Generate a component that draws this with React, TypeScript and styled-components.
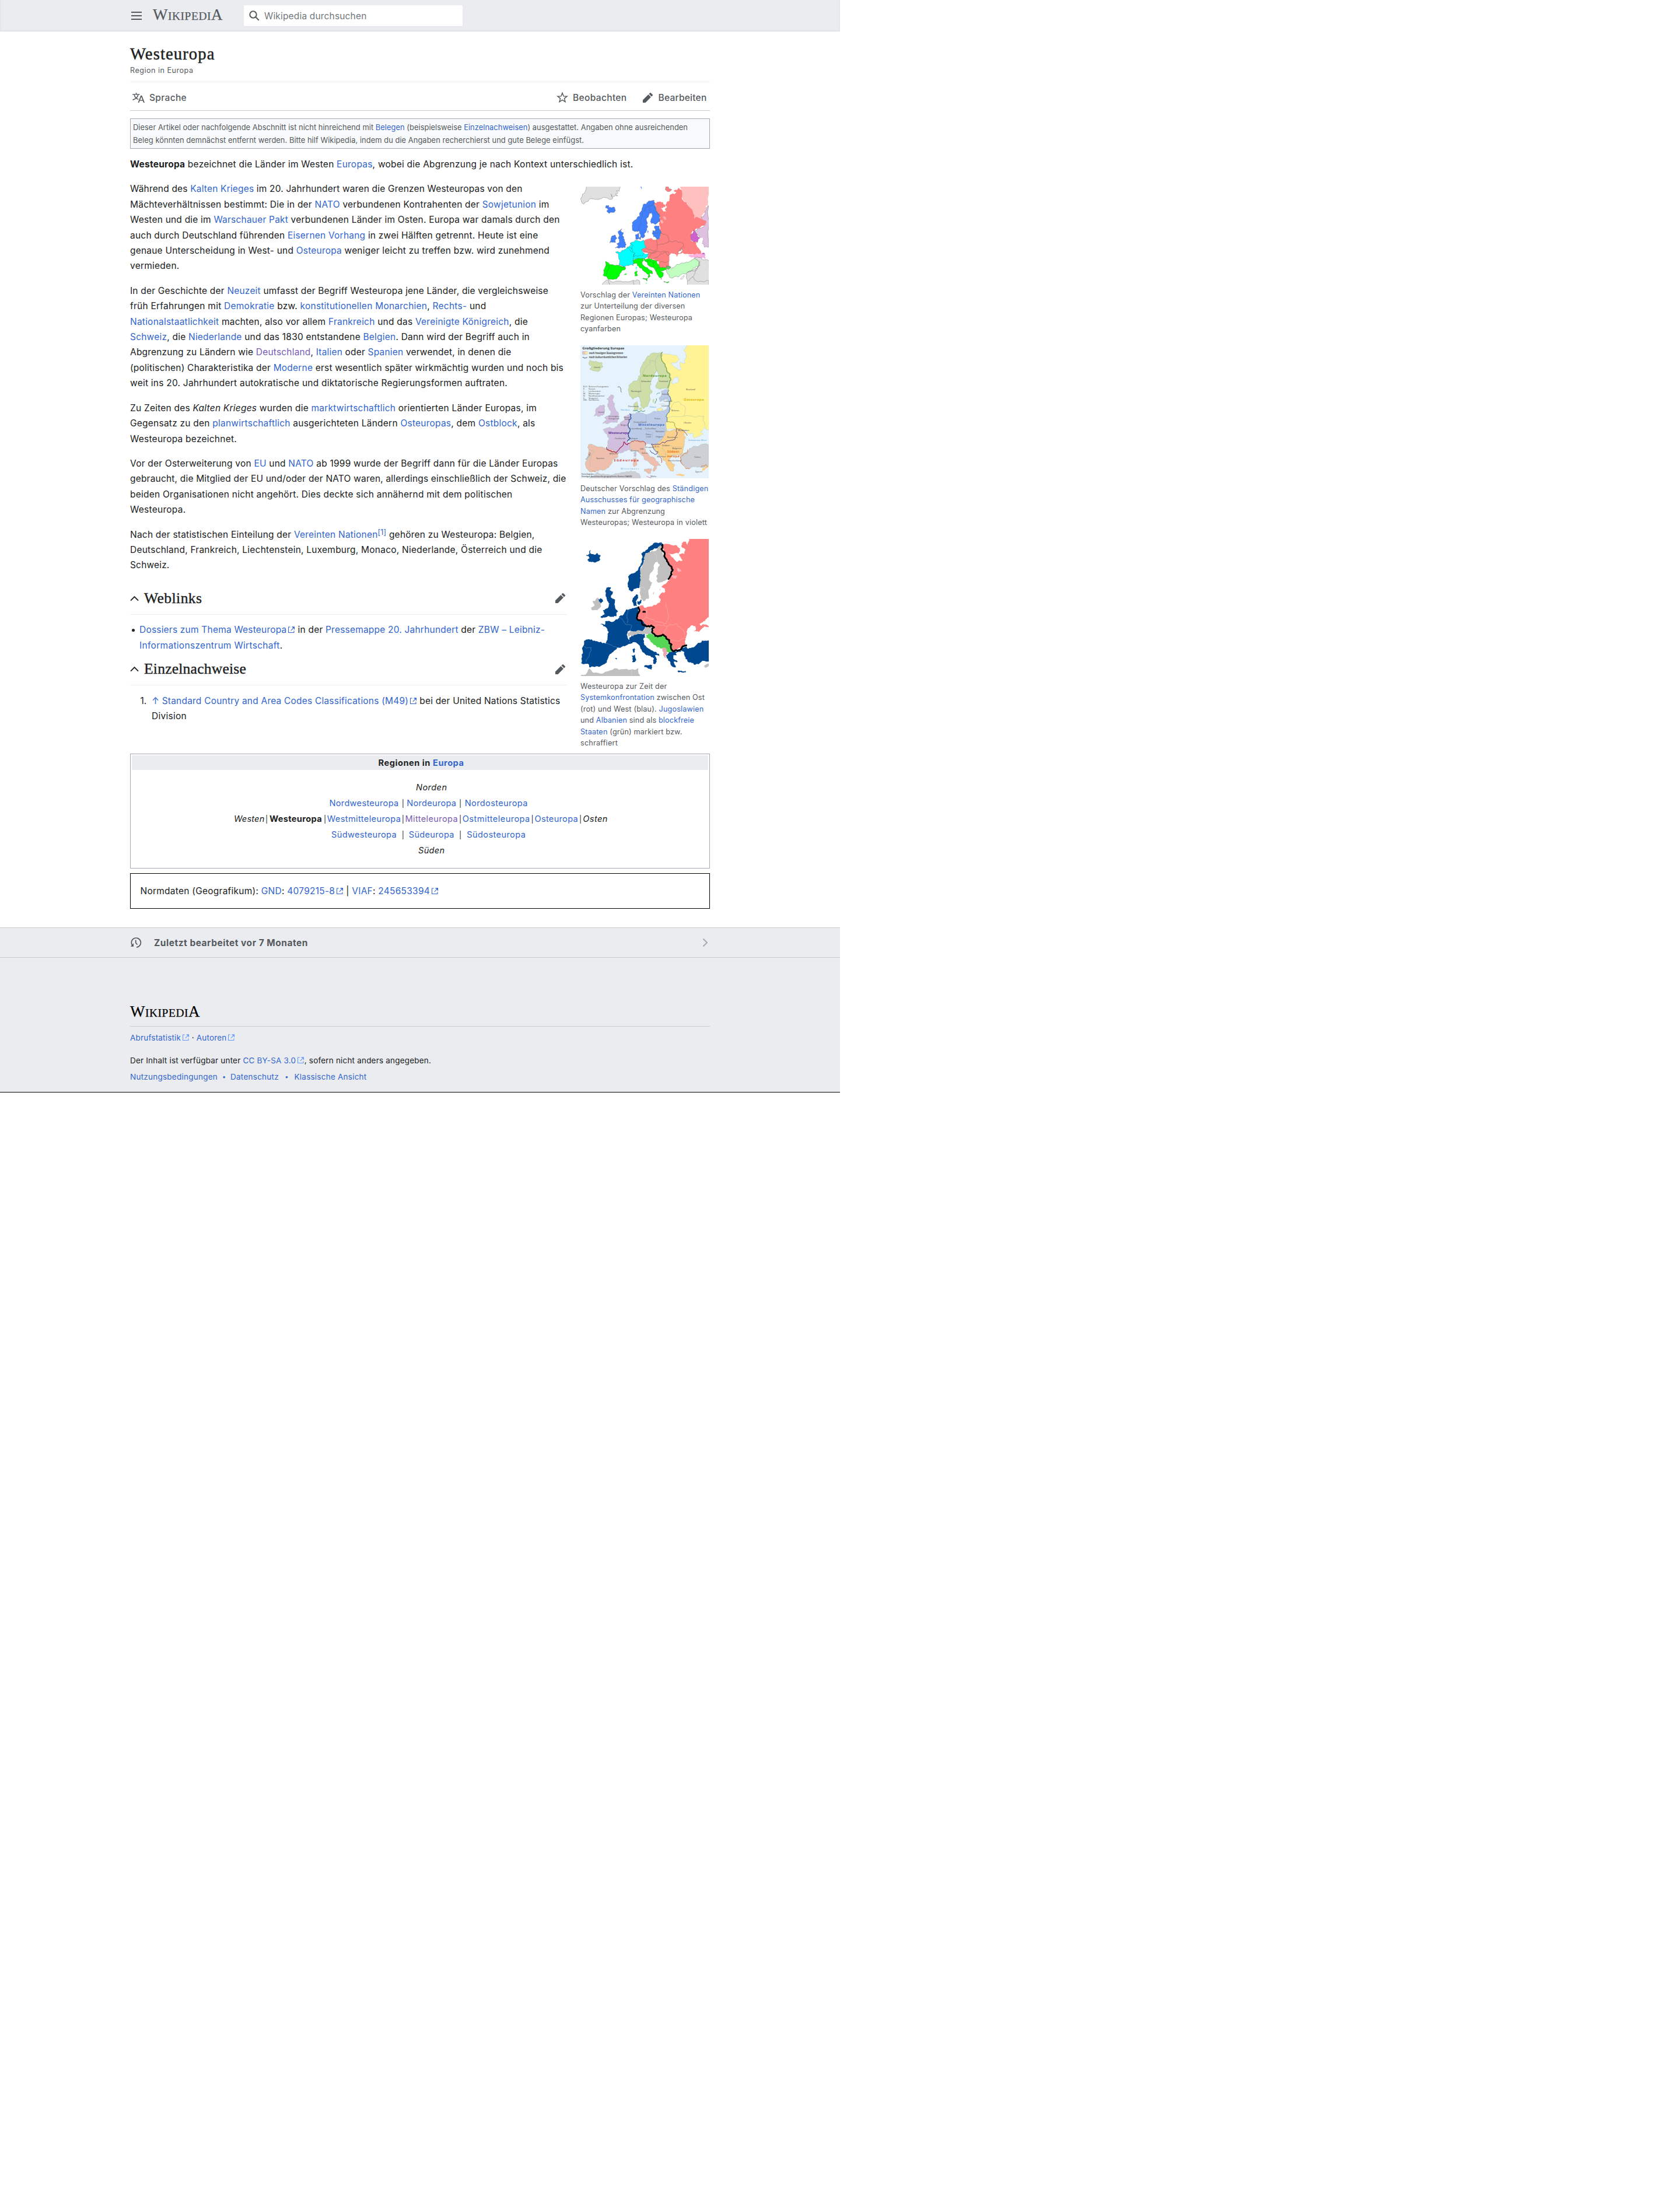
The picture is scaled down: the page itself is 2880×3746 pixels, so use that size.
import React, { useLayoutEffect, useRef, useState } from 'react';
import styled, { createGlobalStyle } from 'styled-components';

const sans = `Inter, "Liberation Sans", sans-serif`;
const serif = `"Liberation Serif", serif`;

const GlobalStyle = createGlobalStyle`
  body { margin: 0; background: #fff; color: #202122; font-family: ${sans}; }
  svg { display: block; flex: none; }
`;

const Page = styled.div`
  width: 1440px;
  font-size: 15.5px;
  font-weight: 430;
`;

/* ---------- text primitives ---------- */

const LineBox = styled.span`
  display: block;
  width: max-content;
  white-space: nowrap;
`;

type FitProps = { w: number; children: React.ReactNode };

/* A line of text whose tracking is adjusted so that it spans w pixels. */
function Fit({ w, children }: FitProps) {
  const ref = useRef<HTMLSpanElement>(null);
  const [tracking, setTracking] = useState(0);
  useLayoutEffect(() => {
    const el = ref.current;
    if (!el) return;
    el.style.letterSpacing = '0px';
    const natural = el.getBoundingClientRect().width;
    const count = (el.textContent || '').length || 1;
    const next = (w - natural) / count;
    el.style.letterSpacing = `${next}px`;
    setTracking(next);
  }, [w]);
  return (
    <LineBox ref={ref} style={{ letterSpacing: `${tracking}px` }}>
      {children}
    </LineBox>
  );
}

const A = styled.a<{ $visited?: boolean }>`
  color: ${(p) => (p.$visited ? '#795cb2' : '#3366cc')};
  text-decoration: none;
`;

const Ref = styled.sup`
  font-size: 12.4px;
  line-height: 1;
  vertical-align: 5px;
`;

const Ext = styled.svg.attrs({ viewBox: '1 0.5 10.5 10.5', width: 11, height: 11 })<{ $light?: boolean }>`
  display: inline-block;
  margin: 0 1px 0 2.5px;
  vertical-align: 0;
  fill: none;
  stroke: ${(p) => (p.$light ? '#6699ff' : '#3366cc')};
  stroke-width: 1;
`;

function ExternalIcon({ light }: { light?: boolean }) {
  return (
    <Ext $light={light}>
      <path d="M4.5 1.5h-3v9h9v-3M7 1.5h4v4M10.8 1.7 5.5 7" />
      <path d="M7.5 1h4v4z" fill={light ? '#6699ff' : '#3366cc'} stroke="none" />
    </Ext>
  );
}

/* ---------- header ---------- */

const TopBar = styled.header`
  box-sizing: border-box;
  height: 54px;
  padding-left: 225px;
  display: flex;
  align-items: center;
  background: #eaecf0;
  box-shadow: inset 0 -1px 3px rgba(0, 0, 0, 0.08);
`;

const Burger = styled.div`
  width: 18px;
  height: 14px;
  display: flex;
  flex-direction: column;
  justify-content: space-between;
  & > i { height: 2px; background: #54595d; }
`;

const Logo = styled.div<{ $dark?: boolean }>`
  display: flex;
  align-items: baseline;
  font-family: ${serif};
  font-size: 19.5px;
  line-height: 30px;
  color: ${(p) => (p.$dark ? '#000' : '#54595d')};
  -webkit-text-stroke: 0.25px;
  & b { font-weight: 400; font-size: 27px; }
`;

const LogoSlot = styled.div`
  width: 156px;
  padding: 0 0 2px 19px;
  box-sizing: border-box;
  margin-right: 19px;
`;

function Wordmark({ dark }: { dark?: boolean }) {
  return (
    <Logo $dark={dark}>
      <Fit w={120}><b>W</b>IKIPEDI<b>A</b></Fit>
    </Logo>
  );
}

const Search = styled.div`
  box-sizing: border-box;
  width: 375px;
  height: 36px;
  padding-left: 9px;
  display: flex;
  align-items: center;
  gap: 8px;
  background: #fff;
  border-radius: 2px;
  box-shadow: 0 1px 1px rgba(0, 0, 0, 0.05);
  color: #72777d;
`;

/* ---------- title and toolbar ---------- */

const Content = styled.main`
  width: 994px;
  margin-left: 223px;
`;

const TitleBlock = styled.div`
  padding: 20px 0 9px;
  border-bottom: 1px solid #eaecf0;
`;

const Title = styled.h1`
  margin: 0;
  font: 400 28.7px/36px ${serif};
  -webkit-text-stroke: 0.45px;
`;

const Subtitle = styled.div`
  padding-top: 1px;
  font-size: 12.6px;
  line-height: 20px;
  color: #54595d;
`;

const Toolbar = styled.div`
  box-sizing: border-box;
  height: 49px;
  padding: 4px 5.5px 0 4px;
  display: flex;
  align-items: center;
  justify-content: space-between;
  border-bottom: 1px solid #c8ccd1;
  color: #54595d;
  font-weight: 500;
`;

const Actions = styled.div`
  display: flex;
  gap: 26px;
`;

const Tool = styled.div<{ $gap?: number }>`
  display: flex;
  align-items: center;
  gap: ${(p) => p.$gap ?? 8}px;
`;

const Notice = styled.div`
  box-sizing: border-box;
  height: 52px;
  margin: 13px 0 14px;
  padding: 4px 4px 2px;
  border: 1px solid #a2a9b1;
  background: #f8f9fa;
  color: #54595d;
  font-size: 12.9px;
  line-height: 21.9px;
`;

/* ---------- article ---------- */

const P = styled.p`
  margin: 0 0 16px;
  line-height: 26.4px;
`;

const Columns = styled.div`
  display: grid;
  grid-template-columns: 749px 222px;
  column-gap: 23px;
  height: 980.4px;
`;

const Section = styled.h2`
  margin: 0;
  height: 54px;
  padding-right: 2px;
  display: flex;
  align-items: center;
  border-bottom: 1px solid #eaecf0;
  font: 400 25.6px/30px ${serif};
  -webkit-text-stroke: 0.4px;
  & > :first-child { margin-right: 9px; }
  & > :last-child { margin-left: auto; }
`;

const List = styled.div`
  display: flex;
  margin-top: 13.5px;
  line-height: 26.4px;
`;

const Bullet = styled.i`
  width: 5px;
  height: 5px;
  margin: 11px 8.5px 0 2.5px;
  border-radius: 50%;
  background: #202122;
`;

const Num = styled.span`
  width: 19.5px;
  padding-left: 17.5px;
`;

const Figures = styled.aside`
  display: flex;
  flex-direction: column;
  gap: 18.5px;
  padding-top: 8.6px;
`;

const Figure = styled.figure`
  margin: 0;
  display: flex;
  flex-direction: column;
  gap: 7.5px;
`;

const Caption = styled.figcaption`
  color: #54595d;
  font-size: 12.6px;
  line-height: 19.5px;
`;

/* ---------- navigation box ---------- */

const NavBox = styled.nav`
  box-sizing: border-box;
  height: 197px;
  padding: 2px;
  border: 1px solid #a2a9b1;
  font-size: 14.6px;
`;

const NavHead = styled.div`
  height: 25px;
  padding: 1px 0 0 4px;
  box-sizing: border-box;
  display: flex;
  align-items: center;
  justify-content: center;
  background: #eaecf0;
  font-weight: 650;
`;

const NavGrid = styled.div`
  display: grid;
  grid-template-columns: 52.5px 7px 93px 7px 127px 6.5px 91.5px 7px 116.5px 7px 75.5px 7px 44px;
  grid-auto-rows: 27px;
  align-items: center;
  justify-items: center;
  justify-content: start;
  padding: 17px 0 0 175px;
`;

const Cell = styled.div<{ $col?: number; $kind?: 'i' | 'b' | 'sep' }>`
  grid-column: ${(p) => p.$col ?? 'auto'};
  font-size: ${(p) => (p.$kind === 'sep' ? '12.5px' : 'inherit')};
  font-style: ${(p) => (p.$kind === 'i' ? 'italic' : 'normal')};
  font-weight: ${(p) => (p.$kind === 'b' ? 700 : 'inherit')};
`;

const Norm = styled.div`
  box-sizing: border-box;
  height: 61px;
  margin-top: 8px;
  padding-left: 16.5px;
  display: flex;
  align-items: center;
  border: 1px solid #000;
`;

/* ---------- footer ---------- */

const Footer = styled.footer`
  box-sizing: border-box;
  height: 283px;
  margin-top: 32px;
  background: #eaecf0;
  border-bottom: 1px solid #000;
`;

const LastEdit = styled.div`
  box-sizing: border-box;
  height: 52px;
  padding: 1px 226px 0 223px;
  display: flex;
  align-items: center;
  border: solid #c8ccd1;
  border-width: 1px 0;
  color: #54595d;
  font-weight: 650;
  & > :first-child { margin-right: 21px; }
  & > :last-child { margin-left: auto; }
`;

const FooterBody = styled.div`
  width: 994px;
  margin-left: 223px;
  padding-top: 77px;
  font-size: 13.5px;
  line-height: 22px;
`;

const FooterLogo = styled.div`
  padding-bottom: 10px;
  margin-bottom: 8px;
  height: 30px;
  border-bottom: 1px solid #c8ccd1;
`;

const FooterRow = styled.div<{ $after?: number }>`
  display: flex;
  height: 22px;
  margin-bottom: ${(p) => p.$after ?? 0}px;
`;

const Dot = styled.span<{ $w: number }>`
  width: ${(p) => p.$w}px;
  text-align: center;
  color: #3366cc;
  font-size: 11px;
`;

/* ---------- icons ---------- */

function Pencil() {
  return (
    <svg width="19" height="19" viewBox="0 0 20 20" fill="#54595d">
      <path d="M16.77 8l1.94-2a1 1 0 0 0 0-1.41l-3.34-3.3a1 1 0 0 0-1.41 0L12 3.23zM1 14.25V19h4.75l9.96-9.96-4.75-4.75z" />
    </svg>
  );
}

function Chevron() {
  return (
    <svg width="15" height="10" viewBox="0 0 15 10" fill="none" stroke="#202122" strokeWidth="1.9">
      <path d="M1 8.7 7.5 2.2 14 8.7" />
    </svg>
  );
}

function Language() {
  return (
    <svg width="21" height="21" viewBox="0 0 20 20" fill="#54595d">
      <path d="M20 18h-1.44a.61.61 0 0 1-.4-.12.81.81 0 0 1-.23-.31L17 15h-5l-1 2.54a.77.77 0 0 1-.22.3.59.59 0 0 1-.4.14H9l4.55-11.47h1.89zm-3.53-4.31L14.89 9.500a11.62 11.62 0 0 1-.39-1.24q-.09.37-.19.69l-.19.56-1.58 4.19zm-6.3-1.58a13.43 13.43 0 0 1-2.91-1.41 11.46 11.46 0 0 0 2.81-5.37H12V4H7.310a4 4 0 0 0-.2-.56C6.870 2.790 6.600 2 6.600 2l-1.470.5s.4.890.6 1.500H0v1.330h2.150A11.230 11.230 0 0 0 5 10.700a17.190 17.190 0 0 1-5 2.100q.56.820.870 1.380a23.280 23.280 0 0 0 5.220-2.510 15.640 15.640 0 0 0 3.560 1.770zM3.630 5.330h4.910a8.110 8.110 0 0 1-2.450 4.450 9.110 9.110 0 0 1-2.460-4.450z" />
    </svg>
  );
}

function Star() {
  return (
    <svg width="20" height="20" viewBox="0 0 20 20" fill="none" stroke="#54595d" strokeWidth="1.5">
      <path d="m10 2.400 2.150 5.500 5.900.3-4.600 3.700 1.550 5.700-5-3.250-5 3.250 1.550-5.700-4.600-3.700 5.900-.3z" />
    </svg>
  );
}

function Magnifier() {
  return (
    <svg width="18" height="18" viewBox="0 0 18 18" fill="none" stroke="#54595d" strokeWidth="2">
      <circle cx="7" cy="7" r="5.700" />
      <path d="m11 11 5.800 5.800" />
    </svg>
  );
}

function History() {
  return (
    <svg width="20" height="20" viewBox="0 0 20 20" fill="none" stroke="#54595d" strokeWidth="1.700">
      <path d="M4.300 15.300A8 8 0 1 1 11 18" />
      <path d="M9.700 5.500v5l2.800 3" />
      <path d="M.8 16.800h5.200V11z" fill="#54595d" stroke="none" />
    </svg>
  );
}

function Next() {
  return (
    <svg width="10" height="16" viewBox="0 0 10 16" fill="none" stroke="#a2a9b1" strokeWidth="2">
      <path d="m1.500 1.500 6.500 6.500-6.500 6.500" />
    </svg>
  );
}

/* ---------- maps ---------- */

type Pt = [number, number];

/* Splits an edge at a displaced midpoint; the offset depends only on the
   midpoint, so neighbouring shapes that share an edge stay joined. */
function split(a: Pt, b: Pt, depth: number): Pt[] {
  const len = Math.hypot(b[0] - a[0], b[1] - a[1]);
  if (depth === 0 || len < 7) return [b];
  const mx = (a[0] + b[0]) / 2;
  const my = (a[1] + b[1]) / 2;
  const s = Math.sin(mx * 12.9898 + my * 78.233) * 43758.5453;
  const t = Math.sin(mx * 39.346 + my * 11.135) * 24634.6345;
  const k = Math.min(len * 0.22, 5);
  const m: Pt = [mx + (s - Math.floor(s) - 0.5) * 2 * k, my + (t - Math.floor(t) - 0.5) * 2 * k];
  return [...split(a, m, depth - 1), ...split(m, b, depth - 1)];
}

function trace(points: string, close: boolean): string {
  const n = points.trim().split(/[\s,]+/).map(Number);
  const pts: Pt[] = [];
  for (let i = 0; i < n.length; i += 2) pts.push([n[i], n[i + 1]]);
  const out: Pt[] = [pts[0]];
  for (let i = 1; i < pts.length; i++) out.push(...split(pts[i - 1], pts[i], 3));
  if (close) out.push(...split(pts[pts.length - 1], pts[0], 3));
  return 'M' + out.map((p) => `${p[0].toFixed(1)} ${p[1].toFixed(1)}`).join('L') + (close ? 'Z' : '');
}

const Land = ({ c, p, s }: { c: string; p: string; s?: string }) => (
  <path d={trace(p, true)} fill={c} stroke={s} />
);
const Edge = ({ p, c, w }: { p: string; c?: string; w?: number }) => (
  <path d={trace(p, false)} fill="none" stroke={c} strokeWidth={w} />
);

function MapRegions() {
  const blue = '#4080ff';
  const red = '#ff8080';
  const cyan = '#00ffff';
  const green = '#00ff00';
  const grey = '#e0e0e0';
  return (
    <svg width="220" height="168" viewBox="105 60 660 504" stroke="#5c5c5c" strokeWidth="1.200" strokeLinejoin="round">
      <Land c={grey} p="142 55 315 55 308 70 304 85 290 80 298 92 285 98 296 108 268 112 262 98 272 118 250 123 220 116 190 124 160 122 145 135 122 150 112 140 108 120 115 100 128 88 135 72" />
      <Land c="#ffc0c0" s="none" p="612 55 765 55 765 165 755 155 748 185 730 215 735 235 752 240 720 272 705 275 680 240 660 160 628 120" />
      <Land c="#e0c0e0" p="765 158 752 170 745 200 725 218 735 235 752 240 745 260 705 280 688 290 718 320 735 330 728 350 740 370 765 370" />
      <Land c={red} s="none" p="484 145 500 138 530 142 543 155 540 165 518 170 527 180 545 190 540 178 550 166 542 152 560 135 568 100 590 98 598 88 585 82 610 66 625 78 628 125 660 160 685 195 690 225 705 215 735 232 752 240 745 258 705 275 690 285 675 300 672 335 700 345 705 370 722 385 735 405 690 410 660 408 630 400 612 405 600 420 590 405 565 408 562 430 560 450 558 475 545 480 520 478 508 445 480 432 455 430 455 402 435 400 420 385 440 375 432 340 470 325 500 332 515 322 519 300 512 262 510 240 515 215 500 190 492 165" />
      <Land c={red} p="540 58 556 60 558 72 575 75 555 86 542 76" />
      <Land c="#fff" s="none" p="552 100 560 120 556 112 550 108" />
      <Land c="#ffb0b0" s="none" p="514 236 524 232 532 242 522 250" />
      <Land c="#ffb0b0" s="none" p="530 212 545 222 546 229 534 224" />
      <Land c="#fff" p="606 400 612 390 628 380 630 392 618 404" />
      <Land c="#d060d0" p="688 282 700 300 720 325 705 348 675 335 672 310 684 300" />
      <Land c="#fff" s="none" p="706 350 720 325 735 322 733 340 728 358 745 375 765 380 765 430 752 425 745 405 725 400 712 375" />
      <Land c="#ffb0e0" s="none" p="655 410 700 405 728 402 728 420 720 430 700 425 685 422" />
      <Land c="#f0b0e0" s="none" p="725 403 745 405 750 430 735 424 728 432 718 425" />
      <Land c="#c050c0" s="none" p="728 398 742 400 745 407 732 406" />
      <Land c={grey} p="690 428 712 425 765 440 765 570 655 570 650 505 690 485 718 465 712 445" />
      <Land c="#c0ffc0" p="548 470 575 482 600 460 650 448 690 428 715 445 720 465 690 478 655 500 630 508 600 522 565 528 552 505" />
      <Land c="#fff" p="620 535 637 516 640 520 630 534" />
      <Edge p="655 500 685 495 712 470" />
      <Edge p="658 545 680 525 712 470 718 440" />
      <Edge p="680 525 700 545 765 545" />
      <Land c={blue} p="236 170 238 156 252 158 250 165 262 168 280 166 286 182 275 193 255 197 240 186 248 178" />
      <Land c={blue} s="none" p="410 55 424 55 418 74" />
      <Land c={blue} p="425 165 430 150 445 150 458 132 484 130 483 150 492 165 500 190 515 212 510 240 485 252 470 250 465 238 470 225 476 208 472 193 460 197 455 215 445 235 445 255 450 270 443 290 436 310 425 325 415 318 407 288 385 292 372 280 371 245 390 230 410 210 418 185" />
      <Edge p="407 288 412 262 412 230 425 190 440 168 450 162" />
      <Edge p="450 162 462 172 468 195" />
      <Edge p="450 162 470 158 484 142" />
      <Land c={blue} p="485 266 510 262 513 280 519 300 512 325 498 332 480 318 474 300 478 285 490 290" />
      <Edge p="478 288 514 282" />
      <Edge p="474 304 519 302" />
      <Land c={blue} p="387 308 404 297 405 312 402 330 392 332" />
      <Land c={blue} p="408 322 416 320 414 332 407 330" />
      <Land c={blue} s="none" p="449 286 456 288 455 300 450 296" />
      <Land c={blue} p="298 292 318 276 314 290 326 296 320 312 332 340 341 358 335 374 300 376 283 375 300 365 292 352 306 345 300 325 303 305" />
      <Land c={blue} p="265 318 285 310 293 325 287 345 256 350 262 335" />
      <Land c={cyan} p="362 350 382 345 388 335 400 338 412 342 430 335 436 360 440 375 420 385 430 402 455 405 452 422 430 428 380 432 375 460 378 466 345 465 330 474 302 465 306 435 300 415 285 396 310 398 318 388 342 378 355 368" />
      <Edge p="342 378 362 390 385 402 378 425 372 440" />
      <Edge p="362 350 376 362 368 380 372 395" />
      <Edge p="352 372 372 378" />
      <Edge p="385 402 378 420 400 418 425 415 430 402" />
      <Land c={cyan} s="none" p="388 477 396 472 396 490 390 492" />
      <Land c={green} p="235 444 250 452 300 465 338 478 315 498 305 520 290 535 248 538 240 522 220 515 225 488 238 465" />
      <Edge p="234 462 254 466 244 490 240 520" />
      <Edge p="302 465 340 478" />
      <Land c={green} s="none" p="330 510 342 506 340 514 332 514" />
      <Land c={green} p="376 440 400 430 428 430 430 440 422 452 440 475 475 500 477 506 462 505 464 522 454 530 456 512 440 500 410 478 395 455 378 458" />
      <Land c={green} p="425 532 452 530 448 545" />
      <Land c={green} p="385 500 398 495 398 518 386 520" />
      <Land c={green} p="430 430 470 432 500 440 510 465 518 478 548 480 545 488 518 492 530 520 520 538 508 522 496 500 485 480 450 460 438 445" />
      <Edge p="440 442 470 445 482 455 482 472" />
      <Edge p="480 432 482 455" />
      <Edge p="490 490 500 478 518 478" />
      <Land c={green} p="535 547 560 548 558 553 536 552" />
      <Land c={green} s="none" p="440 555 448 556 444 560" />
      <Land c="#60c060" p="548 466 565 468 572 474 556 486" />
      <Edge p="495 332 500 358 540 350 555 345" />
      <Edge p="500 358 495 385 480 392 440 378" />
      <Edge p="420 385 455 402 495 393 540 395 562 405" />
      <Edge p="455 430 475 400 495 393" />
      <Edge p="480 432 500 425 515 405 540 395" />
      <Edge p="510 448 545 450 560 445" />
      <Edge p="519 300 540 305 558 325 555 345 590 338 630 350 632 370 610 390" />
      <Edge p="540 395 555 415 565 408" />
      <Edge p="484 145 500 190 515 215 510 240" />
      <Land c={grey} p="215 570 240 540 260 546 300 545 370 544 405 540 412 570" />
      <Edge p="250 545 255 570" />
      <Edge p="378 544 382 570" />
    </svg>
  );
}

const MapText = styled.text<{ $size?: number; $fill?: string; $bold?: boolean; $italic?: boolean; $track?: number }>`
  font-family: "Open Sans", sans-serif;
  font-size: ${(p) => p.$size ?? 12}px;
  font-weight: ${(p) => (p.$bold ? 700 : 400)};
  font-style: ${(p) => (p.$italic ? 'italic' : 'normal')};
  letter-spacing: ${(p) => p.$track ?? -0.5}px;
  fill: ${(p) => p.$fill ?? '#555'};
  stroke: none;
`;

const countries: [number, number, string][] = [
  [174, 153, 'Island'], [416, 224, 'Schweden'], [510, 224, 'Finnland'], [365, 276, 'Norwegen'],
  [648, 268, 'Russland'], [523, 291, 'Estland'], [534, 328, 'Lettland'], [521, 352, 'Litauen'],
  [350, 354, 'Dänemark'], [573, 375, 'Belarus'], [196, 385, 'Irland'], [248, 405, 'Vereinigtes'],
  [250, 416, 'Königreich'], [328, 410, 'Nieder-'], [332, 421, 'lande'], [312, 449, 'Belgien'],
  [378, 434, 'Deutschland'], [486, 417, 'Polen'], [636, 439, 'Ukraine'], [360, 469, 'Luxemburg'],
  [436, 467, 'Tschechien'], [492, 484, 'Slowakei'], [440, 499, 'Öster-'], [442, 510, 'reich'],
  [492, 509, 'Ungarn'], [358, 520, 'Schweiz'], [282, 519, 'Frankreich'], [607, 476, 'Moldawien'],
  [551, 514, 'Rumänien'], [524, 556, 'Serbien'], [486, 560, 'B.-H.'], [438, 563, 'Kroatien'],
  [577, 571, 'Bulgarien'], [254, 597, 'Andorra'], [362, 583, 'Monaco'], [410, 573, 'S.M.'],
  [420, 595, 'Italien'], [186, 622, 'Spanien'], [499, 611, 'Albanien'], [554, 634, 'Griechenland'],
  [690, 614, 'Türkei'], [695, 691, 'Zypern'], [466, 714, 'Malta'],
];

function MapDivision() {
  const green = '#cfdda6';
  const yellow = '#fff396';
  const violet = '#d2bfe0';
  const blue = '#bccbe8';
  const salmon = '#efbfae';
  const orange = '#fbd08c';
  return (
    <svg width="220" height="228" viewBox="105 36 660 684" stroke="#9ab0a8" strokeWidth="1.200" strokeLinejoin="round">
      <rect x="105" y="36" width="660" height="684" fill="#e6f3fc" stroke="none" />
      <Land c={yellow} s="#a9c8d8" p="655 30 770 30 770 480 745 455 735 470 722 482 735 492 715 505 690 515 685 490 655 488 640 470 600 465 545 475 548 430 545 400 562 370 570 320 555 290 553 262 570 225 565 180 540 140 520 100 528 80 560 82 600 88 612 110 600 125 570 128 590 150 615 165 625 155 618 120 640 130 650 90 636 60" />
      <Land c="#e6f3fc" s="#a9c8d8" p="580 215 600 195 610 210 600 230 580 235" />
      <Land c={green} s="#88b0a0" p="355 240 375 225 400 215 415 180 420 145 440 110 460 90 485 75 525 72 520 100 540 140 565 180 570 215 550 258 520 262 495 255 493 240 512 190 500 165 485 180 482 200 465 225 462 255 475 275 460 300 455 340 432 362 415 345 410 305 395 300 375 315 357 295" />
      <Edge p="410 305 414 250 415 200 440 150 465 112 490 120 500 165" />
      <Edge p="490 120 500 90 522 95" />
      <Land c={green} p="148 125 155 112 172 118 190 122 215 125 222 145 205 165 175 168 152 158 165 148" />
      <Land c={green} p="378 345 395 325 400 345 395 372 380 365" />
      <Land c={green} s="none" p="408 358 422 355 420 370 408 370" />
      <Land c={green} s="none" p="476 315 484 312 482 332 476 330" />
      <Land c={violet} p="240 310 262 290 275 295 270 315 282 335 285 365 302 395 296 430 260 432 220 438 242 420 228 408 250 400 262 378 245 352 250 330" />
      <Land c={violet} p="183 365 205 345 232 350 228 390 200 402 175 400 185 385" />
      <Land c={violet} p="335 400 360 390 365 425 350 465 352 500 345 530 358 545 362 575 330 580 292 590 245 570 252 520 235 490 222 470 265 462 285 455 310 435 325 425" />
      <Land c={blue} p="360 392 388 388 400 378 425 385 442 392 480 375 535 372 552 365 560 330 555 315 515 325 510 305 525 290 520 272 555 268 558 295 570 320 562 370 545 400 548 430 545 475 540 495 520 525 500 542 470 545 440 540 405 525 358 530 350 500 350 465 362 425" />
      <Land c="#fff3a0" p="500 365 520 357 530 370 502 373" />
      <Edge p="442 392 450 440 490 450 540 470" />
      <Edge p="510 310 560 305" />
      <Edge p="508 338 562 340" />
      <Edge p="415 455 440 475 480 485 475 515" />
      <Edge p="475 460 490 480 545 475" />
      <Edge p="560 375 585 330 610 325 640 350 640 400 740 400 745 450" />
      <Edge p="548 405 640 400" />
      <Land c={salmon} p="142 562 150 545 180 552 245 570 303 590 298 610 270 625 262 650 235 675 180 685 145 680 130 650 145 600" />
      <Edge p="150 570 175 580 160 610 155 660" />
      <Land c={salmon} p="358 548 375 530 405 525 440 540 435 560 440 580 465 610 505 635 518 655 500 655 495 672 480 685 482 655 450 630 420 600 395 575 365 575" />
      <Land c={salmon} p="432 675 470 670 465 695 435 685" />
      <Land c={salmon} p="376 620 392 615 392 655 378 658" />
      <Land c={violet} p="378 590 390 582 390 608 380 606" />
      <Land c={orange} p="470 545 500 542 520 525 548 475 600 465 640 480 645 510 640 545 630 590 615 605 590 600 570 610 560 622 590 650 582 685 565 680 545 645 525 610 490 580" />
      <Edge p="530 545 560 550 635 560" />
      <Edge p="525 560 540 600 580 605" />
      <Land c="#cfd0d6" p="620 595 650 585 680 560 730 545 770 545 770 655 730 665 690 660 650 668 620 640" />
      <Land c="#cfd0d6" p="155 715 190 690 250 700 320 690 385 685 410 700 412 725 150 725" />
      <Land c={orange} s="none" p="728 680 760 655 762 662 740 682" />
      <Land c={orange} s="none" p="595 698 640 700 638 706 600 704" />
      <Edge c="#7da63a" w={3.500} p="528 70 520 100 540 140 565 185 570 215 556 258" />
      <Edge c="#3d6b9a" w={2.800} p="556 262 558 295 570 320 562 370 545 400 550 430" />
      <Edge c="#7d8f3a" w={2.500} p="550 430 585 432 598 465" />
      <Edge c="#1f7a68" w={2.500} p="375 370 405 378 438 372" />
      <Edge c="#333" w={2} p="296 250 312 258 317 278" />
      <Edge c="#1f7a68" w={2.500} p="496 310 494 322 488 335" />
      <Edge c="#1f7a68" w={2} p="496 288 505 282 515 280" />
      <Edge c="#2b3f94" w={3.500} p="358 388 366 410 350 440 358 465 350 490 360 515 346 530" />
      <Edge c="#a02050" w={3.500} p="238 560 255 578 290 588 305 570 330 532 346 548 360 538" />
      <Edge c="#c0392b" w={3} p="360 538 385 525 405 530 436 535 438 552" />
      <Edge c="#5b4690" w={3} p="468 545 500 545 540 538 590 520 604 485 598 465" />
      <Edge c="#3c4f90" w={3} p="472 548 490 578 505 585 490 598 462 575" />
      <Edge c="#d08a20" w={3.500} p="598 465 625 470 655 500" />
      <Edge c="#d0502b" w={3} p="514 612 522 640" />
      <Edge c="#e07a30" w={2.500} p="655 572 652 592 618 610 620 635 645 668 668 668" />
      <Edge c="#d0702b" w={2.500} p="726 662 752 650 758 662" />
      <Edge c="#e07a30" w={2} p="150 684 185 687" />
      <Edge c="#c05090" w={2} p="445 708 470 716" />
      <MapText x="115" y="58" $size={18} $bold $fill="#333" $track={-0.1}>Großgliederung Europas</MapText>
      <rect x="116" y="68" width="24" height="14" fill="#e8c8b8" stroke="#9a8fb0" />
      <rect x="130" y="69" width="10" height="13" fill="#ffe890" stroke="none" />
      <MapText x="149" y="80" $size={13} $bold $fill="#555">nach heutigen Staatsgrenzen</MapText>
      <Edge c="#4a4480" w={3} p="116 98 140 98" />
      <MapText x="149" y="102" $size={13} $bold $fill="#555">nach kulturräumlichen Kriterien</MapText>
      {[['B.-H.', 'Bosnien-Herzegowina'], ['K.', 'Kosovo'], ['L.', 'Liechtenstein'], ['M.', 'Montenegro'], ['N.', 'Nordmazedonien'], ['S.', 'Slowenien'], ['S.M.', 'San Marino']].map(([k, v], i) => (
        <g key={k}>
          <MapText x="119" y={252 + i * 11.700} $size={11}>{k}</MapText>
          <MapText x="147" y={252 + i * 11.700} $size={11}>{v}</MapText>
        </g>
      ))}
      {countries.map(([x, y, name]) => (
        <MapText key={name} x={x} y={y}>{name}</MapText>
      ))}
      <MapText x="138" y="628" transform="rotate(-62 138 628)">Portugal</MapText>
      <MapText x="426" y="198" $size={18} $bold $fill="#5a9a2a" $track={1.400}>Nordeuropa</MapText>
      <MapText x="636" y="320" $size={18} $bold $fill="#d8b800" $track={1.100}>Osteuropa</MapText>
      <MapText x="402" y="450" $size={18} $bold $fill="#3f6ab8" $track={1.500}>Mitteleuropa</MapText>
      <MapText x="248" y="493" $size={18} $bold $fill="#5f3c98" $track={0}>Westeuropa</MapText>
      <MapText x="277" y="634" $size={18} $bold $fill="#d23c3c" $track={3.800}>Südeuropa</MapText>
      <MapText x="551" y="589" $size={17} $bold $fill="#e87818" $track={0.500}>Südost-</MapText>
      <MapText x="551" y="613" $size={17} $bold $fill="#e87818" $track={0.500}>europa</MapText>
      <MapText x="312" y="373" $italic $fill="#4d9fd6" $track={0.500}>Nordsee</MapText>
      <MapText x="460" y="356" $italic $fill="#4d9fd6" $track={0}>Ostsee</MapText>
      <MapText x="659" y="529" $italic $fill="#4d9fd6" $size={13} $track={0.300}>Schwarzes Meer</MapText>
      <MapText x="312" y="675" $italic $fill="#4d9fd6" $size={13} $track={3.500}>Mittelmeer</MapText>
      <MapText x="110" y="701" $size={11} $fill="#333">Vorschlag des</MapText>
      <MapText x="110" y="713" $size={11} $fill="#333">Ständigen Ausschuss für geographische Namen (StAGN)</MapText>
    </svg>
  );
}

function MapBlocs() {
  const navy = '#004990';
  const red = '#ff8080';
  const grey = '#c0c0c0';
  return (
    <svg width="220" height="235" viewBox="105 42 660 705" stroke="none" strokeLinejoin="round" strokeLinecap="round">
      <Land c={red} p="660 36 772 36 772 498 745 490 715 520 685 520 700 505 695 490 672 490 650 520 645 560 648 590 610 605 578 618 570 580 555 560 530 535 490 540 475 520 478 495 445 490 420 462 397 458 405 420 405 392 430 382 432 395 500 375 515 368 510 345 520 322 512 300 530 280 560 255 580 215 560 180 535 130 525 75 560 68 600 75 618 92 610 118 575 120 558 115 575 135 600 160 630 155 620 135 612 120 640 118 645 95 625 82 632 60 645 55 655 76" />
      <Land c="#fff" p="772 445 750 455 735 470 718 478 728 488 748 482 772 498" />
      <Land c="#fff" p="512 285 525 290 540 300 538 318 520 322 514 308" />
      <Land c="#ffb0b8" p="575 222 585 230 602 232 596 246 580 242" />
      <Land c="#ffb0b8" p="602 190 615 196 626 210 612 212" />
      <Land c={navy} p="350 235 375 220 400 205 415 170 420 145 418 118 450 95 465 78 490 60 522 58 528 75 500 90 470 100 440 120 430 165 412 200 415 260 408 295 388 298 370 312 355 305 350 265" />
      <Land c={grey} p="412 295 415 255 415 200 430 160 440 115 470 105 500 95 518 75 535 130 560 180 580 215 560 250 520 265 498 260 495 235 512 180 500 158 485 170 482 195 462 225 460 255 475 268 460 300 458 345 432 362 415 345 412 310" />
      <Edge c="#dedede" w={1.500} p="470 105 490 120 498 158" />
      <Edge c="#dedede" w={1.500} p="415 297 430 290 436 302" />
      <Land c={grey} p="478 318 486 312 482 330" />
      <Land c={navy} p="134 125 152 118 158 98 156 116 180 124 190 114 208 125 208 148 190 158 165 160 142 152 152 140" />
      <Land c={navy} p="375 345 395 326 398 350 390 362 395 388 380 388" />
      <Land c={navy} p="394 362 404 364 416 352 418 370 408 382 398 374" />
      <Land c={grey} p="160 400 178 380 170 360 195 345 212 360 212 388 195 405 178 408" />
      <Land c={navy} p="196 352 216 350 222 362 212 372 200 362" />
      <Land c={navy} p="235 305 240 292 262 292 255 305 272 312 262 340 275 350 280 380 298 415 290 440 250 438 208 445 232 430 220 412 240 400 255 375 240 345 235 330" />
      <Land c={navy} p="125 565 150 558 182 568 236 580 245 545 250 520 235 495 208 480 232 482 232 465 262 468 285 458 305 440 325 432 340 405 360 402 390 395 406 392 402 440 395 458 420 462 445 490 435 500 425 515 390 520 360 512 345 530 355 560 362 580 340 590 296 600 270 625 250 645 235 680 200 700 150 702 145 685 108 680 118 630" />
      <Edge c="#7f9fc8" w={1.500} p="125 595 160 600 150 640 135 675" />
      <Edge c="#7f9fc8" w={1.500} p="236 580 300 602" />
      <Edge c="#7f9fc8" w={1.500} p="305 445 330 470 370 488 362 515" />
      <Edge c="#7f9fc8" w={1.500} p="362 405 345 430 350 455 345 475" />
      <Land c={navy} p="355 550 372 535 400 528 438 530 440 548 428 560 440 590 470 615 510 635 516 648 488 640 498 660 490 685 478 680 482 655 450 640 420 612 400 582 380 572 358 582" />
      <Land c={navy} p="432 695 474 690 470 714 435 702" />
      <Land c={navy} p="367 640 386 635 388 670 372 674" />
      <Land c={navy} p="374 608 384 603 382 626 376 626" />
      <Land c={navy} p="280 658 294 655 290 664" />
      <Land c={grey} p="345 525 362 515 390 518 425 515 440 495 472 492 476 515 468 530 435 528 400 530 372 542 348 542" />
      <Land c="#55d655" p="442 535 470 530 490 542 530 535 555 560 572 580 578 618 560 628 542 612 528 605 500 600 480 585 465 565 442 550" />
      <Land c="#e8a8b0" p="526 602 542 600 550 625 542 655 530 640" />
      <Land c={navy} p="545 640 560 628 580 622 620 612 625 620 595 628 600 640 582 645 592 665 605 675 585 672 596 702 580 700 568 678 558 668" />
      <Land c={navy} p="605 720 648 722 646 728 610 728" />
      <Land c={navy} p="622 605 650 595 655 605 685 600 730 565 772 560 772 675 735 668 718 682 688 688 655 670 640 640 640 625 625 618" />
      <Land c={grey} p="742 700 760 682 772 684 750 704" />
      <Land c={grey} p="105 747 135 735 150 708 165 725 210 735 270 715 330 712 405 708 410 750 105 750" />
      <Edge c="#ddd" w={1.500} p="368 715 370 747" />
      <Edge c="#ffb8b8" w={1.800} p="440 395 448 445 490 465 545 478 560 440 545 372" />
      <Edge c="#ffb8b8" w={1.800} p="420 462 450 445" />
      <Edge c="#ffb8b8" w={1.800} p="480 500 510 485 550 490 600 478 640 520 645 545" />
      <Edge c="#ffb8b8" w={1.800} p="530 535 550 495" />
      <Edge c="#ffb8b8" w={1.800} p="568 565 600 568 645 552" />
      <g stroke="#000" fill="none" strokeWidth="8.500">
        <Edge p="528 72 521 95 538 112 536 130 556 165 580 200 574 225 558 248" />
        <Edge p="403 393 408 415 395 445 400 458 418 462 430 485 445 492 470 487 484 497 473 522 490 541 512 541 528 534 540 542 548 556 562 562 562 578 574 585 570 602 580 618 622 610 632 594 650 589" />
        <Edge p="428 417 437 417" />
      </g>
    </svg>
  );
}

/* ---------- page ---------- */

const Sep = ({ col }: { col?: number }) => <Cell $col={col} $kind="sep">|</Cell>;

const Word = ({ col, w, kind, visited, plain, children }: { col?: number; w: number; kind?: 'i' | 'b'; visited?: boolean; plain?: boolean; children: string }) => (
  <Cell $col={col} $kind={kind}>
    <Fit w={w}>{plain ? children : <A $visited={visited}>{children}</A>}</Fit>
  </Cell>
);

export default function App() {
  return (
    <Page>
      <GlobalStyle />
      <TopBar>
        <Burger><i /><i /><i /></Burger>
        <LogoSlot><Wordmark /></LogoSlot>
        <Search>
          <Magnifier />
          <Fit w={175.500}>Wikipedia durchsuchen</Fit>
        </Search>
      </TopBar>

      <Content>
        <TitleBlock>
          <Title><Fit w={145.500}>Westeuropa</Fit></Title>
          <Subtitle><Fit w={108.500}>Region in Europa</Fit></Subtitle>
        </TitleBlock>
        <Toolbar>
          <Tool><Language /><Fit w={64}>Sprache</Fit></Tool>
          <Actions>
            <Tool><Star /><Fit w={92.500}>Beobachten</Fit></Tool>
            <Tool $gap={9}><Pencil /><Fit w={83}>Bearbeiten</Fit></Tool>
          </Actions>
        </Toolbar>
        <Notice>
          <Fit w={951}>Dieser Artikel oder nachfolgende Abschnitt ist nicht hinreichend mit <A>Belegen</A> (beispielsweise <A>Einzelnachweisen</A>) ausgestattet. Angaben ohne ausreichenden</Fit>
          <Fit w={773}>Beleg könnten demnächst entfernt werden. Bitte hilf Wikipedia, indem du die Angaben recherchierst und gute Belege einfügst.</Fit>
        </Notice>

        <P><Fit w={862.500}><b>Westeuropa</b> bezeichnet die Länder im Westen <A>Europas</A>, wobei die Abgrenzung je nach Kontext unterschiedlich ist.</Fit></P>

        <Columns>
          <div>
            <P>
              <Fit w={672.500}>Während des <A>Kalten Krieges</A> im 20. Jahrhundert waren die Grenzen Westeuropas von den</Fit>
              <Fit w={718.500}>Mächteverhältnissen bestimmt: Die in der <A>NATO</A> verbundenen Kontrahenten der <A>Sowjetunion</A> im</Fit>
              <Fit w={736.500}>Westen und die im <A>Warschauer Pakt</A> verbundenen Länder im Osten. Europa war damals durch den</Fit>
              <Fit w={699.500}>auch durch Deutschland führenden <A>Eisernen Vorhang</A> in zwei Hälften getrennt. Heute ist eine</Fit>
              <Fit w={719}>genaue Unterscheidung in West- und <A>Osteuropa</A> weniger leicht zu treffen bzw. wird zunehmend</Fit>
              <Fit w={84.500}>vermieden.</Fit>
            </P>
            <P>
              <Fit w={717}>In der Geschichte der <A>Neuzeit</A> umfasst der Begriff Westeuropa jene Länder, die vergleichsweise</Fit>
              <Fit w={610.500}>früh Erfahrungen mit <A>Demokratie</A> bzw. <A>konstitutionellen Monarchien</A>, <A>Rechts-</A> und</Fit>
              <Fit w={682}><A>Nationalstaatlichkeit</A> machten, also vor allem <A>Frankreich</A> und das <A>Vereinigte Königreich</A>, die</Fit>
              <Fit w={685}><A>Schweiz</A>, die <A>Niederlande</A> und das 1830 entstandene <A>Belgien</A>. Dann wird der Begriff auch in</Fit>
              <Fit w={653.500}>Abgrenzung zu Ländern wie <A $visited>Deutschland</A>, <A>Italien</A> oder <A>Spanien</A> verwendet, in denen die</Fit>
              <Fit w={743}>(politischen) Charakteristika der <A>Moderne</A> erst wesentlich später wirkmächtig wurden und noch bis</Fit>
              <Fit w={647}>weit ins 20. Jahrhundert autokratische und diktatorische Regierungsformen auftraten.</Fit>
            </P>
            <P>
              <Fit w={697}>Zu Zeiten des <i>Kalten Krieges</i> wurden die <A>marktwirtschaftlich</A> orientierten Länder Europas, im</Fit>
              <Fit w={694.500}>Gegensatz zu den <A>planwirtschaftlich</A> ausgerichteten Ländern <A>Osteuropas</A>, dem <A>Ostblock</A>, als</Fit>
              <Fit w={183}>Westeuropa bezeichnet.</Fit>
            </P>
            <P>
              <Fit w={733.500}>Vor der Osterweiterung von <A>EU</A> und <A>NATO</A> ab 1999 wurde der Begriff dann für die Länder Europas</Fit>
              <Fit w={747.500}>gebraucht, die Mitglied der EU und/oder der NATO waren, allerdings einschließlich der Schweiz, die</Fit>
              <Fit w={655.500}>beiden Organisationen nicht angehört. Dies deckte sich annähernd mit dem politischen</Fit>
              <Fit w={95.500}>Westeuropa.</Fit>
            </P>
            <P>
              <Fit w={693.500}>Nach der statistischen Einteilung der <A>Vereinten Nationen<Ref>[1]</Ref></A> gehören zu Westeuropa: Belgien,</Fit>
              <Fit w={706.500}>Deutschland, Frankreich, Liechtenstein, Luxemburg, Monaco, Niederlande, Österreich und die</Fit>
              <Fit w={67.500}>Schweiz.</Fit>
            </P>

            <Section><Chevron /><Fit w={99.500}>Weblinks</Fit><Pencil /></Section>
            <List>
              <Bullet />
              <div>
                <Fit w={695}><A>Dossiers zum Thema Westeuropa<ExternalIcon /></A> in der <A>Pressemappe 20. Jahrhundert</A> der <A>ZBW – Leibniz-</A></Fit>
                <Fit w={245.500}><A>Informationszentrum Wirtschaft</A>.</Fit>
              </div>
            </List>
            <Section><Chevron /><Fit w={175}>Einzelnachweise</Fit><Pencil /></Section>
            <List>
              <Num>1.</Num>
              <div>
                <Fit w={700.500}><A>↑ Standard Country and Area Codes Classifications (M49)<ExternalIcon /></A> bei der United Nations Statistics</Fit>
                <Fit w={60}>Division</Fit>
              </div>
            </List>
          </div>

          <Figures>
            <Figure>
              <MapRegions />
              <Caption>
                <Fit w={205.500}>Vorschlag der <A>Vereinten Nationen</A></Fit>
                <Fit w={179.500}>zur Unterteilung der diversen</Fit>
                <Fit w={192}>Regionen Europas; Westeuropa</Fit>
                <Fit w={69}>cyanfarben</Fit>
              </Caption>
            </Figure>
            <Figure>
              <MapDivision />
              <Caption>
                <Fit w={219.500}>Deutscher Vorschlag des <A>Ständigen</A></Fit>
                <Fit w={196}><A>Ausschusses für geographische</A></Fit>
                <Fit w={145}><A>Namen</A> zur Abgrenzung</Fit>
                <Fit w={217}>Westeuropas; Westeuropa in violett</Fit>
              </Caption>
            </Figure>
            <Figure>
              <MapBlocs />
              <Caption>
                <Fit w={148.500}>Westeuropa zur Zeit der</Fit>
                <Fit w={213}><A>Systemkonfrontation</A> zwischen Ost</Fit>
                <Fit w={211.500}>(rot) und West (blau). <A>Jugoslawien</A></Fit>
                <Fit w={195}>und <A>Albanien</A> sind als <A>blockfreie</A></Fit>
                <Fit w={174.500}><A>Staaten</A> (grün) markiert bzw.</Fit>
                <Fit w={64}>schraffiert</Fit>
              </Caption>
            </Figure>
          </Figures>
        </Columns>

        <NavBox>
          <NavHead><Fit w={147}>Regionen in <A>Europa</A></Fit></NavHead>
          <NavGrid>
            <Word col={7} w={53.500} kind="i" plain>Norden</Word>
            <Word col={5} w={119}>Nordwesteuropa</Word><Sep />
            <Word w={85}>Nordeuropa</Word><Sep />
            <Word w={108}>Nordosteuropa</Word>
            <Word col={1} w={52.500} kind="i" plain>Westen</Word><Sep />
            <Word w={90} kind="b" plain>Westeuropa</Word><Sep />
            <Word w={126.500}>Westmitteleuropa</Word><Sep />
            <Word w={90.500} visited>Mitteleuropa</Word><Sep />
            <Word w={116}>Ostmitteleuropa</Word><Sep />
            <Word w={74.500}>Osteuropa</Word><Sep />
            <Word w={42.500} kind="i" plain>Osten</Word>
            <Word col={5} w={112}>Südwesteuropa</Word><Sep />
            <Word w={78}>Südeuropa</Word><Sep />
            <Word w={101}>Südosteuropa</Word>
            <Word col={7} w={45.500} kind="i" plain>Süden</Word>
          </NavGrid>
        </NavBox>

        <Norm>
          <Fit w={511}>Normdaten (Geografikum): <A>GND</A>: <A>4079215-8<ExternalIcon /></A> | <A>VIAF</A>: <A>245653394<ExternalIcon /></A></Fit>
        </Norm>
      </Content>

      <Footer>
        <LastEdit>
          <History />
          <Fit w={264}>Zuletzt bearbeitet vor 7 Monaten</Fit>
          <Next />
        </LastEdit>
        <FooterBody>
          <FooterLogo><Wordmark dark /></FooterLogo>
          <FooterRow $after={17}>
            <Fit w={180}><A>Abrufstatistik<ExternalIcon light /></A> · <A>Autoren<ExternalIcon light /></A></Fit>
          </FooterRow>
          <FooterRow $after={6}>
            <Fit w={516}>Der Inhalt ist verfügbar unter <A>CC BY-SA 3.0<ExternalIcon light /></A>, sofern nicht anders angegeben.</Fit>
          </FooterRow>
          <FooterRow>
            <Fit w={150}><A>Nutzungsbedingungen</A></Fit><Dot $w={22}>•</Dot>
            <Fit w={83}><A>Datenschutz</A></Fit><Dot $w={26.500}>•</Dot>
            <Fit w={124}><A>Klassische Ansicht</A></Fit>
          </FooterRow>
        </FooterBody>
      </Footer>
    </Page>
  );
}
